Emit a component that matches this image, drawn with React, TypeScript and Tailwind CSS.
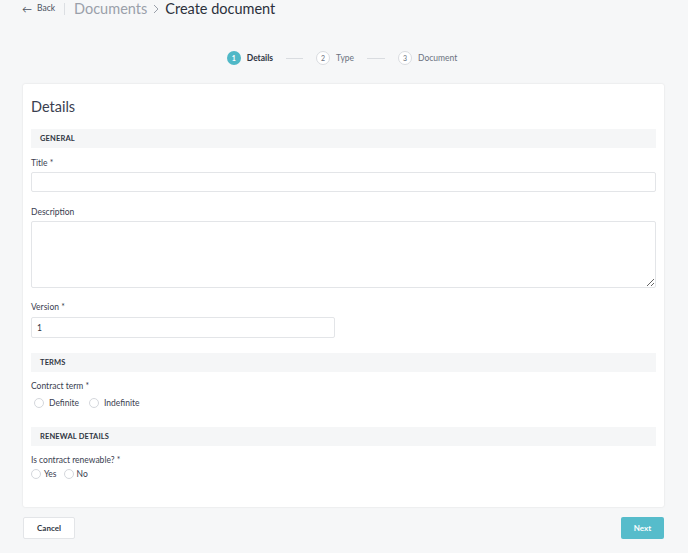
import React from 'react';

const font = { fontFamily: 'Lato, "Open Sans", sans-serif' };

const Band = ({ label, className = '' }: { label: string; className?: string }) => (
  <div className={`h-[19px] bg-[#f5f6f7] flex items-center pl-[9px] text-[7.5px] font-bold tracking-[0.02em] text-[#2f3542] ${className}`}>
    {label}
  </div>
);

const Label = ({ children, className = '' }: { children: React.ReactNode; className?: string }) => (
  <div className={`h-[12px] leading-[12px] text-[8.5px] text-[#3a4050] ${className}`}>{children}</div>
);

const Radio = ({ label, gap = 'gap-[5px]' }: { label: string; gap?: string }) => (
  <label className={`flex items-center ${gap}`}>
    <span className="w-[10px] h-[10px] rounded-full border border-[#d4d7dc] bg-white" />
    <span className="text-[8.5px] text-[#3a4050]">{label}</span>
  </label>
);

const Step = ({ n, label, active }: { n: number; label: string; active?: boolean }) => (
  <div className="flex items-center gap-[6px]">
    {active ? (
      <span className="w-[14px] h-[14px] rounded-full bg-[#4fb8c7] text-white text-[7px] font-bold flex items-center justify-center">{n}</span>
    ) : (
      <span className="w-[14px] h-[14px] rounded-full border border-[#d9dce0] bg-white text-[#6b7280] text-[7px] flex items-center justify-center">{n}</span>
    )}
    <span className={`text-[8.5px] ${active ? 'font-bold text-[#2f3542]' : 'text-[#6b7280]'}`}>{label}</span>
  </div>
);

export default function App() {
  return (
    <div className="w-[688px] h-[553px] bg-[#f6f7f8] overflow-hidden" style={font}>
      {/* Header */}
      <div className="flex items-center h-[17px] pl-[22px]">
        <div className="flex items-center gap-[5px] text-[8.5px] text-[#4b5160]">
          <span className="text-[10px] leading-none">←</span>
          <span>Back</span>
        </div>
        <div className="w-px h-[12px] bg-[#dcdfe3] ml-[9px] mr-[9px]" />
        <span className="text-[14.5px] text-[#9aa0aa]">Documents</span>
        <svg className="w-[8px] h-[10px] mx-[5px]" viewBox="0 0 8 10" fill="none" stroke="#9aa0aa" strokeWidth="1">
          <path d="M2 1l4 4-4 4" />
        </svg>
        <span className="text-[14.5px] text-[#2b303b]">Create document</span>
      </div>

      {/* Stepper */}
      <div className="flex items-center justify-center mt-[34px] h-[14px] pr-[4px]">
        <Step n={1} label="Details" active />
        <div className="w-[17px] h-px bg-[#d9dce0] mx-[13px]" />
        <Step n={2} label="Type" />
        <div className="w-[18px] h-px bg-[#d9dce0] mx-[13px]" />
        <Step n={3} label="Document" />
      </div>

      {/* Card */}
      <div className="mx-[23px] w-[641px] mt-[19px] bg-white rounded-[2px] shadow-[0_0_2px_rgba(0,0,0,0.12)] px-[8px] pt-[13px] pb-[27px]">
        <div className="h-[20px] leading-[20px] text-[14.5px] text-[#3a4050]">Details</div>
        <Band label="GENERAL" className="mt-[12px]" />

        <Label className="mt-[9px]">Title *</Label>
        <input className="mt-[3px] block w-full h-[20px] border border-[#e3e5e8] rounded-[2px] outline-none" />

        <Label className="mt-[14px]">Description</Label>
        <textarea className="mt-[3px] block w-full h-[67px] border border-[#e3e5e8] rounded-[2px] outline-none resize-y" />

        <Label className="mt-[13px]">Version *</Label>
        <input
          defaultValue="1"
          className="mt-[4px] block w-[304px] h-[21px] border border-[#e3e5e8] rounded-[2px] px-[5px] text-[8.5px] text-[#2f3542] outline-none"
        />

        <Band label="TERMS" className="mt-[15px]" />
        <Label className="mt-[8px]">Contract term *</Label>
        <div className="mt-[5px] h-[12px] flex items-center gap-[10px] pl-[3px]">
          <Radio label="Definite" />
          <Radio label="Indefinite" />
        </div>

        <Band label="RENEWAL DETAILS" className="mt-[18px]" />
        <Label className="mt-[8px]">Is contract renewable? *</Label>
        <div className="mt-[2px] h-[12px] flex items-center gap-[7px]">
          <Radio label="Yes" gap="gap-[3px]" />
          <Radio label="No" gap="gap-[3px]" />
        </div>
      </div>

      {/* Footer */}
      <div className="mx-[23px] w-[641px] mt-[10px] flex justify-between">
        <button className="w-[52px] h-[22px] bg-white border border-[#e3e5e8] rounded-[2px] text-[8px] font-bold text-[#2f3542]">
          Cancel
        </button>
        <button className="w-[43px] h-[22px] bg-[#56bccb] rounded-[2px] text-[8px] font-bold text-white">
          Next
        </button>
      </div>
    </div>
  );
}
